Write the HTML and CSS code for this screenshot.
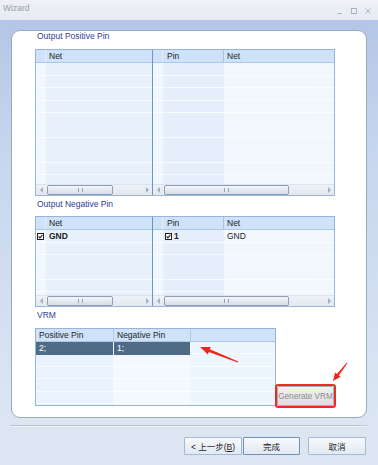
FILE: index.html
```html
<!DOCTYPE html>
<html lang="zh-CN">
<head>
    <meta charset="UTF-8">
    <meta name="viewport" content="width=device-width, initial-scale=1.0">
    <title>Wizard</title>
    <link rel="stylesheet" href="styles.css">
</head>
<body>
    <div class="window">
        <div class="titlebar">
            <span class="title">Wizard</span>
            <div class="win-buttons">
                <svg width="8" height="8" viewBox="0 0 8 8"><path d="M1.5 6.5h4" stroke="#a9b1bd" stroke-width="1"/></svg>
                <svg width="8" height="8" viewBox="0 0 8 8"><rect x="1.5" y="1.5" width="5" height="5" fill="none" stroke="#a9b1bd"/></svg>
                <svg width="8" height="8" viewBox="0 0 8 8"><path d="M1.5 1.5l5 5M6.5 1.5l-5 5" stroke="#a9b1bd" stroke-width="1"/></svg>
            </div>
        </div>
        <div class="client">
            <div class="panel">
                <div class="section-label label-pos">Output Positive Pin</div>
                <div class="grid-pair pair-pos">
                    <div class="grid grid-left">
                        <div class="grid-head">
                            <div class="rh"></div>
                            <div class="hcell fill">Net</div>
                        </div>
                        <div class="grid-body">
                            <div class="gcol c-rh"></div>
                            <div class="gcol c-net-l"></div>
                        </div>
                        <div class="hscroll">
                            <span class="sb-arrow left"></span>
                            <div class="track"><div class="thumb thumb-left"></div></div>
                            <span class="sb-arrow right"></span>
                        </div>
                    </div>
                    <div class="grid grid-right">
                        <div class="grid-head">
                            <div class="rh"></div>
                            <div class="hcell h-pin">Pin</div>
                            <div class="hcell fill">Net</div>
                        </div>
                        <div class="grid-body">
                            <div class="gcol c-rh"></div>
                            <div class="gcol c-pin"></div>
                            <div class="gcol c-net-r"></div>
                        </div>
                        <div class="hscroll">
                            <span class="sb-arrow left"></span>
                            <div class="track"><div class="thumb thumb-right"></div></div>
                            <span class="sb-arrow right"></span>
                        </div>
                    </div>
                </div>

                <div class="section-label">Output Negative Pin</div>
                <div class="grid-pair pair-neg">
                    <div class="grid grid-left">
                        <div class="grid-head">
                            <div class="rh"></div>
                            <div class="hcell fill">Net</div>
                        </div>
                        <div class="grid-body">
                            <div class="gcol c-rh">
                                <div class="cell check-cell">
                                    <svg class="check" width="7" height="7" viewBox="0 0 7 7"><rect x="0.5" y="0.5" width="6" height="6" fill="#fff" stroke="#222"/><path d="M1.6 3.4l1.3 1.4 2.5-3" fill="none" stroke="#222" stroke-width="1.1"/></svg>
                                </div>
                            </div>
                            <div class="gcol c-net-l">
                                <div class="cell bold">GND</div>
                            </div>
                        </div>
                        <div class="hscroll">
                            <span class="sb-arrow left"></span>
                            <div class="track"><div class="thumb thumb-left"></div></div>
                            <span class="sb-arrow right"></span>
                        </div>
                    </div>
                    <div class="grid grid-right">
                        <div class="grid-head">
                            <div class="rh"></div>
                            <div class="hcell h-pin">Pin</div>
                            <div class="hcell fill">Net</div>
                        </div>
                        <div class="grid-body">
                            <div class="gcol c-rh"></div>
                            <div class="gcol c-pin">
                                <div class="cell bold pin-cell">
                                    <svg class="check" width="7" height="7" viewBox="0 0 7 7"><rect x="0.5" y="0.5" width="6" height="6" fill="#fff" stroke="#222"/><path d="M1.6 3.4l1.3 1.4 2.5-3" fill="none" stroke="#222" stroke-width="1.1"/></svg>
                                    1
                                </div>
                            </div>
                            <div class="gcol c-net-r">
                                <div class="cell">GND</div>
                            </div>
                        </div>
                        <div class="hscroll">
                            <span class="sb-arrow left"></span>
                            <div class="track"><div class="thumb thumb-right"></div></div>
                            <span class="sb-arrow right"></span>
                        </div>
                    </div>
                </div>

                <div class="section-label">VRM</div>
                <div class="vrm-row">
                    <div class="vrm-grid">
                        <div class="grid-head">
                            <div class="hcell v1">Positive Pin</div>
                            <div class="hcell v2">Negative Pin</div>
                            <div class="hcell fill"></div>
                        </div>
                        <div class="grid-body">
                            <div class="gcol v1 vb1"><div class="cell selected">2;</div></div>
                            <div class="gcol v2 vb2"><div class="cell selected">1;</div></div>
                            <div class="gcol fill vb3"></div>
                        </div>
                    </div>
                    <div class="highlight">
                        <button class="generate" disabled>Generate VRM</button>
                    </div>
                </div>
            </div>

            <div class="footer">
                <div class="separator"></div>
                <div class="buttons">
                    <button class="btn">&lt; 上一步(<u>B</u>)</button>
                    <button class="btn btn-default">完成</button>
                    <button class="btn btn-cancel">取消</button>
                </div>
            </div>
        </div>

        <!-- red annotation arrows -->
        <svg class="annotations" width="378" height="465" viewBox="0 0 378 465">
            <polygon fill="#f0271f" points="200,347 210.8,347 209.85,349.3 238.2,361.5 237.8,362.5 208.75,352.1 207.8,354.4"/>
            <polygon fill="#f0271f" points="333,381 340.7,376.8 338.85,375.4 347.4,363.3 346.6,362.7 336.95,373.96 335.1,372.5"/>
        </svg>
    </div>
</body>
</html>
```

FILE: styles.css
```css
* {
    box-sizing: border-box;
}
body {
    margin: 0;
    font-family: "Liberation Sans", Arial, "Noto Sans CJK SC", sans-serif;
    font-size: 8.5px;
    color: #1e1e1e;
}
.window {
    position: relative;
    width: 378px;
    height: 465px;
    overflow: hidden;
    display: flex;
    flex-direction: column;
    background: #eaeef4;
}
.titlebar {
    height: 20px;
    display: flex;
    align-items: center;
    justify-content: space-between;
    padding: 0 6px 0 3px;
    background: linear-gradient(#eef1f6, #e6ebf2);
}
.title {
    color: #989ea8;
    font-size: 8.5px;
    margin-top: -4px;
}
.win-buttons {
    display: flex;
    gap: 6px;
    margin-top: 1px;
}
.client {
    flex: 1;
    display: flex;
    flex-direction: column;
    padding-top: 10px;
    background: linear-gradient(#b4c6e6 0, #c6d5ee 120px, #dce6f3 400px);
}
.panel {
    height: 388px;
    margin: 0 11px;
    background: #fff;
    border: 1px solid #9ba9be;
    border-radius: 9px;
    padding-left: 23px;
}
.section-label {
    color: #2f3d96;
    line-height: 12px;
    padding: 2px 0 6px 2px;
}
.section-label.label-pos {
    height: 18px;
    line-height: 10px;
    padding: 0 0 0 2px;
}
.section-label + .vrm-row {
    margin-top: 1px;
}

/* grids */
.grid-pair {
    display: flex;
    width: 300px;
    border: 1px solid #97b4da;
}
.pair-pos {
    height: 147px;
}
.pair-neg {
    height: 91px;
}
.grid {
    display: flex;
    flex-direction: column;
}
.grid-left {
    width: 117px;
    border-right: 1px solid #6f93c6;
}
.grid-right {
    flex: 1;
}
.grid-head {
    display: flex;
    height: 13px;
    line-height: 12px;
    background: #cee2f9;
    border-bottom: 1px solid #abc7ea;
}
.grid-head .rh {
    width: 10px;
    border-right: 1px solid #e4eefb;
}
.hcell {
    padding-left: 3px;
    white-space: nowrap;
}
.h-pin {
    width: 61px;
    padding-left: 4px;
    border-right: 1px solid #a9c2e0;
}
.fill {
    flex: 1;
}
.grid-body {
    flex: 1;
    display: flex;
    min-height: 0;
}
.gcol {
    background-image: repeating-linear-gradient(to bottom, transparent 0, transparent 11.5px, rgba(255, 255, 255, 0.7) 11.5px, rgba(255, 255, 255, 0.7) 12.5px);
}
.c-rh {
    width: 10px;
    background-color: #f1f7fe;
}
.c-net-l {
    flex: 1;
    background-color: #e7f1fc;
}
.c-pin {
    width: 61px;
    background-color: #e5effb;
}
.c-net-r {
    flex: 1;
    background-color: #f2f7fd;
}
.cell {
    height: 12.5px;
    line-height: 12.5px;
    padding-left: 3px;
    white-space: nowrap;
}
.bold {
    font-weight: bold;
}
.check-cell {
    padding-left: 1px;
    display: flex;
    align-items: center;
}
.pin-cell {
    display: flex;
    align-items: center;
    gap: 2px;
    padding-left: 2px;
}
.check {
    display: block;
}

/* scrollbars */
.hscroll {
    height: 11px;
    display: flex;
    background: linear-gradient(#eef2f7, #e2e8f0);
    border-top: 1px solid #dbe3ee;
}
.sb-arrow {
    width: 10px;
    display: flex;
    align-items: center;
    justify-content: center;
}
.sb-arrow::before {
    content: "";
    border-top: 3px solid transparent;
    border-bottom: 3px solid transparent;
}
.sb-arrow.left::before {
    border-right: 3px solid #a4b0c1;
}
.sb-arrow.right::before {
    border-left: 3px solid #a4b0c1;
}
.track {
    flex: 1;
    display: flex;
    align-items: center;
}
.thumb {
    height: 10px;
    margin-left: 1px;
    border: 1px solid #8e9eb8;
    border-radius: 2px;
    background: linear-gradient(#f3f6fa, #d6deea);
    display: flex;
    align-items: center;
    justify-content: center;
}
.thumb::before {
    content: "";
    width: 3px;
    height: 4px;
    border-left: 1px solid #96a5bd;
    border-right: 1px solid #96a5bd;
}
.thumb-left {
    width: 66px;
}
.thumb-right {
    width: 125px;
}

/* VRM */
.vrm-row {
    display: flex;
    align-items: flex-start;
}
.vrm-grid {
    width: 241px;
    height: 78px;
    border: 1px solid #97b4da;
    display: flex;
    flex-direction: column;
}
.v1 {
    width: 78px;
    border-right: 1px solid #b3c9e6;
}
.v2 {
    width: 77px;
    border-right: 1px solid #b3c9e6;
}
.vb1 {
    background-color: #e9f3fd;
    border-right-color: #f3f8fe;
}
.vb2 {
    background-color: #f4f9fe;
    border-right-color: #f3f8fe;
}
.vb3 {
    background-color: #edf5fd;
}
.cell.selected {
    height: 13px;
    background: #4f6b86;
    color: #fff;
}
.highlight {
    margin: 56px 0 0 -1px;
    width: 61px;
    height: 24px;
    border: 2px solid #ef2a22;
    border-radius: 3px;
    display: flex;
}
.generate {
    flex: 1;
    margin: 0;
    padding: 0;
    border: 1px solid #a4aebc;
    border-radius: 2px;
    background: linear-gradient(#f2f2f2, #dedede);
    color: #8a8a8a;
    font-family: inherit;
    font-size: 8.2px;
    white-space: nowrap;
    overflow: visible;
    text-align: center;
}

/* footer */
.footer {
    flex: 1;
    padding-top: 7px;
}
.separator {
    height: 2px;
    margin: 0 11px 0 10px;
    border-top: 1px solid #b8c4d6;
    border-bottom: 1px solid #f1f5fa;
}
.buttons {
    display: flex;
    justify-content: flex-end;
    margin-top: 10px;
    padding-right: 12px;
}
.btn {
    height: 18px;
    width: 58px;
    margin: 0;
    padding: 0;
    border: 1px solid #a7b8d1;
    border-radius: 1px;
    background: linear-gradient(#f7f9fc, #e2e9f3);
    color: #222;
    font-family: "Liberation Sans", Arial, "Noto Sans CJK SC", sans-serif;
    font-size: 8.5px;
}
.btn-default {
    width: 57px;
    margin-left: 1px;
    border-color: #7390bd;
}
.btn-cancel {
    margin-left: 8px;
}
.annotations {
    position: absolute;
    top: 0;
    left: 0;
    pointer-events: none;
}
```
